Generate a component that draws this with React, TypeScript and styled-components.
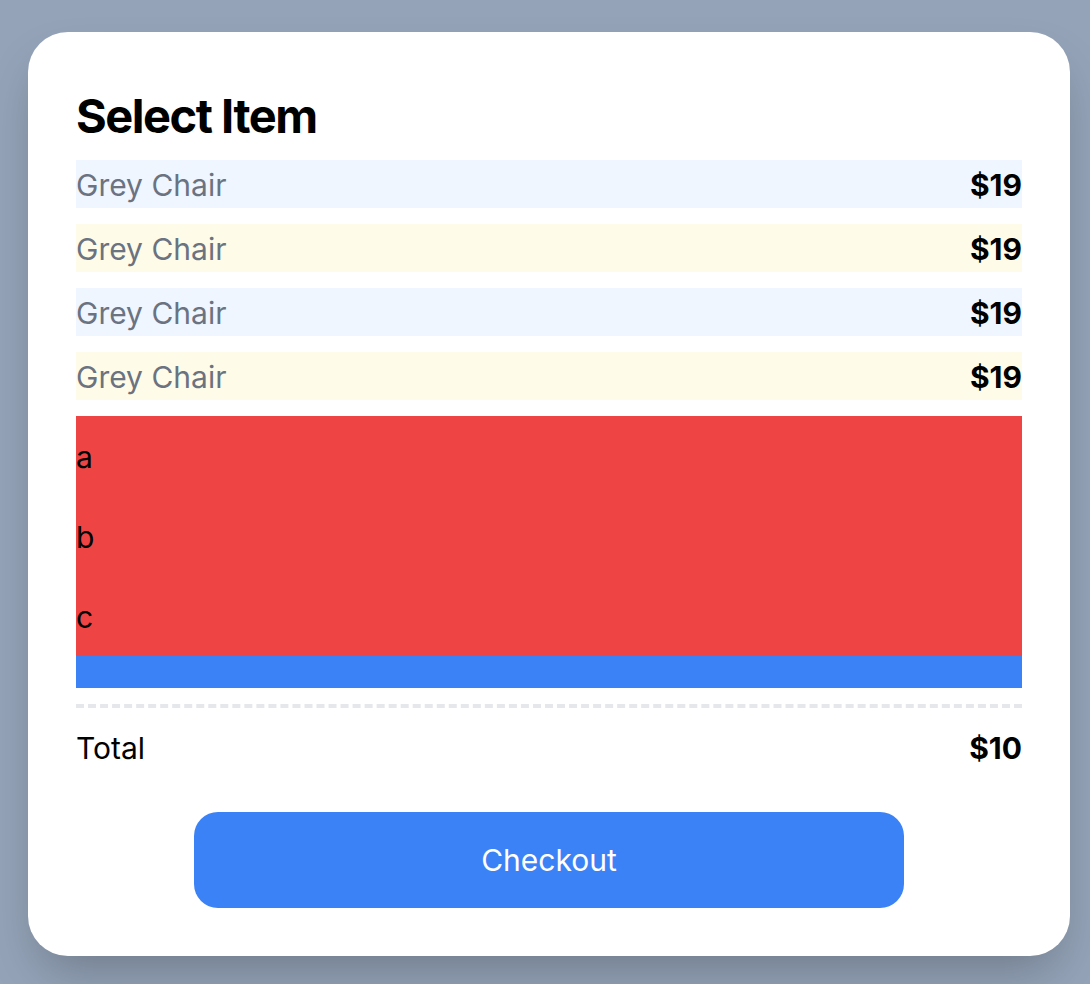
import styled, { createGlobalStyle } from "styled-components"

const GlobalStyle = createGlobalStyle`
    html, body {
        margin: 0;
        padding: 0;
        background: #94a3b8;
    }
    body {
        font-family: 'Inter', 'Noto Sans', sans-serif;
    }
`

const Page = styled.div`
    min-height: 984px;
    box-sizing: border-box;
    padding: 32px 20px 29px 28px;
`

const Card = styled.div`
    background: #ffffff;
    border-radius: 40px;
    padding: 48px;
    box-shadow: 0 25px 50px -12px rgba(0, 0, 0, 0.25);
    display: flex;
    flex-direction: column;
`

const Title = styled.h1`
    margin: 0 0 8px;
    font-size: 47px;
    line-height: 72px;
    font-weight: 700;
    color: #000;
    letter-spacing: -1.5px;
`

const List = styled.div`
    display: flex;
    flex-direction: column;
    gap: 16px;
`

const ItemRow = styled.div<{ $tone: "blue" | "yellow" }>`
    height: 48px;
    display: flex;
    align-items: center;
    justify-content: space-between;
    background: ${p => (p.$tone === "blue" ? "#eff6ff" : "#fefce8")};
    font-size: 30px;
    padding-top: 2px;
    box-sizing: border-box;
`

const ItemName = styled.span`
    color: #6b7280;
`

const Price = styled.span`
    color: #000;
    font-weight: 700;
`

const RedBlock = styled.div`
    background: #ef4444;
    display: flex;
    flex-direction: column;
`

const Letter = styled.div`
    height: 80px;
    display: flex;
    align-items: center;
    font-size: 30px;
    color: #000;
    padding-top: 2px;
    box-sizing: border-box;
`

const BlueBar = styled.div`
    height: 32px;
    background: #3b82f6;
    margin-top: -16px;
`

const Divider = styled.hr`
    margin: 16px 0 0;
    border: none;
    border-top: 4px dashed #e5e7eb;
`

const TotalRow = styled.div`
    margin-top: 16px;
    height: 48px;
    display: flex;
    align-items: center;
    justify-content: space-between;
    font-size: 30px;
    color: #000;
`

const CheckoutButton = styled.button`
    align-self: center;
    width: 75%;
    height: 96px;
    margin-top: 40px;
    border: none;
    border-radius: 24px;
    background: #3b82f6;
    color: #ffffff;
    font-family: inherit;
    font-size: 30px;
    cursor: pointer;
`

const items = [
    { name: "Grey Chair", price: 19, tone: "blue" as const },
    { name: "Grey Chair", price: 19, tone: "yellow" as const },
    { name: "Grey Chair", price: 19, tone: "blue" as const },
    { name: "Grey Chair", price: 19, tone: "yellow" as const },
]

const App = () => {
    return (
        <>
            <GlobalStyle />
            <Page>
                <Card>
                    <Title>Select Item</Title>
                    <List>
                        {items.map((item, i) => (
                            <ItemRow key={i} $tone={item.tone}>
                                <ItemName>{item.name}</ItemName>
                                <Price>${item.price}</Price>
                            </ItemRow>
                        ))}
                        <RedBlock>
                            <Letter>a</Letter>
                            <Letter>b</Letter>
                            <Letter>c</Letter>
                        </RedBlock>
                        <BlueBar />
                    </List>
                    <Divider />
                    <TotalRow>
                        <span>Total</span>
                        <Price>$10</Price>
                    </TotalRow>
                    <CheckoutButton>Checkout</CheckoutButton>
                </Card>
            </Page>
        </>
    )
}

export default App
